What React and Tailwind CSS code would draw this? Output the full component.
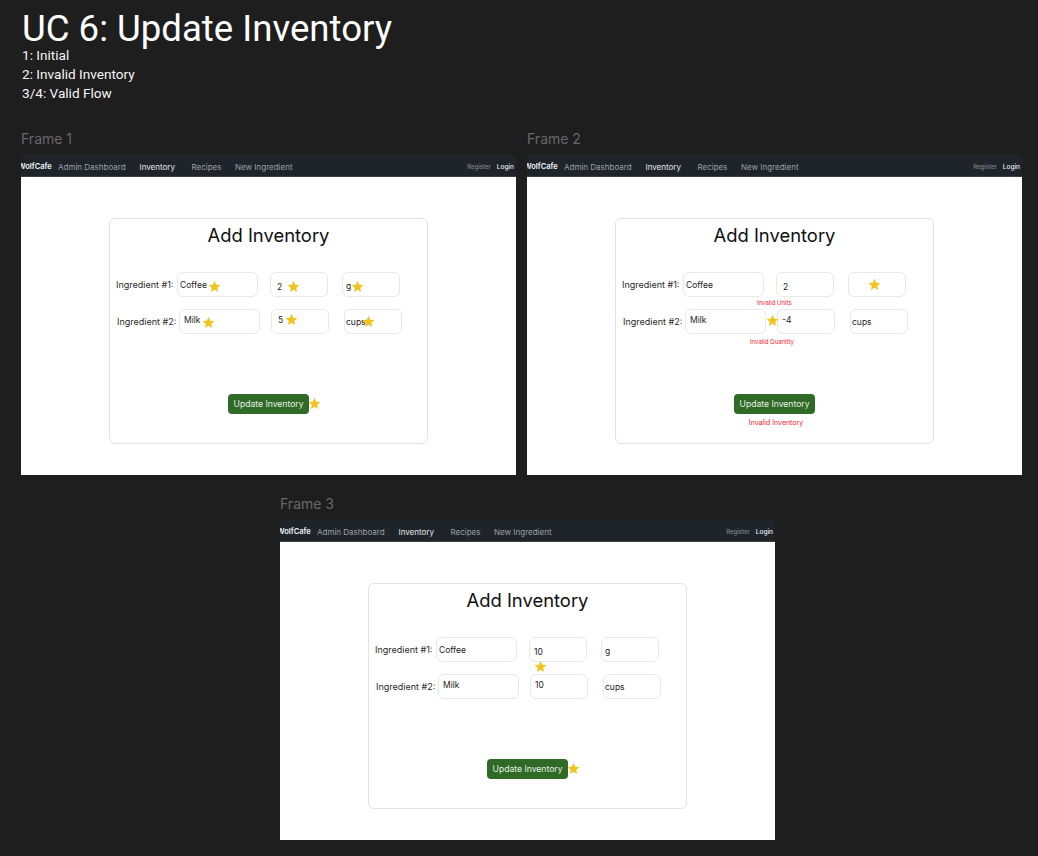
const Star = ({ className }) => (
  <svg viewBox="0 0 24 24" className={`absolute z-10 h-[13px] w-[13px] ${className}`}>
    <polygon
      points="12,1.5 15.1,8.6 22.8,9.4 17,14.6 18.7,22.2 12,18.2 5.3,22.2 7,14.6 1.2,9.4 8.9,8.6"
      fill="#f2c31b"
    />
  </svg>
);

const Field = ({ width, text, textClass, star, error }) => (
  <div
    className={`relative h-[25px] shrink-0 rounded-[6px] border border-[#e8e8e8] bg-white text-[8.5px] leading-[12px] text-[#222] ${width}`}
  >
    <span className={`absolute ${textClass}`}>{text}</span>
    {star && <Star className={star} />}
    {error}
  </div>
);

const ErrorText = ({ className, children }) => (
  <span className={`absolute whitespace-nowrap text-[6px] leading-[8px] text-[#f5222d] ${className}`}>
    {children}
  </span>
);

const Row = ({ className, labelWidth, label, fields }) => (
  <div className={`flex items-center ${className}`}>
    <span className={`shrink-0 whitespace-nowrap pt-px text-[9px] text-[#2a2a2a] ${labelWidth}`}>{label}</span>
    {fields}
  </div>
);

const InventoryCard = ({ mode }) => {
  const one = mode === 1;
  const two = mode === 2;
  const three = mode === 3;

  return (
    <div className="ml-[88px] mt-[41px] h-[226px] w-[319px] rounded-[6px] border border-[#e2e2e2] bg-white">
      <h2 className="h-[53px] pt-[4px] text-center text-[18.4px] leading-[24px] text-[#111]">Add Inventory</h2>

      <Row
        className="ml-[6px]"
        labelWidth="w-[61px]"
        label="Ingredient #1:"
        fields={
          <>
            <Field
              width="w-[81px]"
              text="Coffee"
              textClass="left-[2px] top-[6px]"
              star={one ? "left-[30px] top-[7px]" : null}
            />
            <Field
              width="ml-[12px] w-[58px]"
              text={three ? "10" : "2"}
              textClass={three ? "left-[4px] top-[8px]" : "left-[6px] top-[8px]"}
              star={one ? "left-[16px] top-[7px]" : three ? "left-[4px] top-[22px]" : null}
              error={two ? <ErrorText className="-left-[20px] top-[26px]">Invalid Units</ErrorText> : null}
            />
            <Field
              width="ml-[14px] w-[58px]"
              text={two ? "" : "g"}
              textClass="left-[3px] top-[7px]"
              star={one ? "left-[8px] top-[7px]" : two ? "left-[19px] top-[5px]" : null}
            />
          </>
        }
      />

      <Row
        className="ml-[7px] mt-[12px]"
        labelWidth="w-[62px]"
        label="Ingredient #2:"
        fields={
          <>
            <Field
              width="w-[81px]"
              text="Milk"
              textClass="left-[4px] top-[4px]"
              star={one ? "left-[22px] top-[6px]" : two ? "left-[80px] top-[4px]" : null}
              error={two ? <ErrorText className="left-[64px] top-[28px]">Invalid Quantity</ErrorText> : null}
            />
            <Field
              width="ml-[11px] w-[58px]"
              text={two ? "-4" : three ? "10" : "5"}
              textClass={three ? "left-[4px] top-[4px]" : two ? "left-[4px] top-[4px]" : "left-[6px] top-[4px]"}
              star={one ? "left-[13px] top-[3px]" : null}
            />
            <Field
              width="ml-[15px] w-[58px]"
              text="cups"
              textClass="left-[1px] top-[6px]"
              star={one ? "left-[17px] top-[5px]" : null}
            />
          </>
        }
      />

      <div className="mt-[60px] flex flex-col items-center">
        <button className="relative h-[20px] w-[81px] rounded-[4px] bg-[#2f6a26] text-[8.6px] text-[#e8efe6]">
          Update Inventory
          {(one || three) && <Star className="-right-[12px] top-[3px]" />}
        </button>
        {two && <p className="ml-[3px] mt-[4px] text-[7px] leading-[10px] text-[#f5222d]">Invalid Inventory</p>}
      </div>
    </div>
  );
};

const Frame = ({ label, mode }) => (
  <div className="w-[495px] shrink-0">
    <p className="mb-[7px] h-[18px] text-[14px] leading-[18px] text-[#686868]">{label}</p>
    <nav className="flex h-[22px] items-center overflow-hidden border-b border-[#3a3f45] bg-[#1f242a] pt-[3px] text-[8px] leading-[10px]">
      <span className="-ml-[3px] w-[40px] shrink-0 text-[7.5px] font-semibold text-[#eef5fb]">WolfCafe</span>
      <a className="w-[81.5px] text-[#9aa0a6]">Admin Dashboard</a>
      <a className="w-[52px] text-[#e6e6e6]">Inventory</a>
      <a className="w-[43.5px] text-[#9aa0a6]">Recipes</a>
      <a className="text-[#9aa0a6]">New Ingredient</a>
      <div className="ml-auto mr-[2px] flex items-center gap-[6px] font-medium">
        <a className="text-[6px] leading-[10px] text-[#80858b]">Register</a>
        <a className="text-[6.5px] leading-[10px] text-[#e6f0f8]">Login</a>
      </div>
    </nav>
    <div className="h-[298px] overflow-hidden bg-white">
      <InventoryCard mode={mode} />
    </div>
  </div>
);

const App = () => {
  return (
    <div className="h-[856px] w-[1038px] overflow-hidden bg-[#1e1e1e] font-['Inter',sans-serif]">
      <header className="h-[130px] pl-[22px] pt-[11px] font-['Roboto',sans-serif] text-[#f5f5f5]">
        <h1 className="text-[36.6px] leading-[35px] text-white">UC 6: Update Inventory</h1>
        <p className="text-[13.6px] leading-[19px]">1: Initial</p>
        <p className="text-[13.6px] leading-[19px]">2: Invalid Inventory</p>
        <p className="text-[13.6px] leading-[19px]">3/4: Valid Flow</p>
      </header>
      <div className="flex gap-[11px] pl-[21px]">
        <Frame label="Frame 1" mode={1} />
        <Frame label="Frame 2" mode={2} />
      </div>
      <div className="ml-[280px] mt-[20px]">
        <Frame label="Frame 3" mode={3} />
      </div>
    </div>
  );
};

export default App;
